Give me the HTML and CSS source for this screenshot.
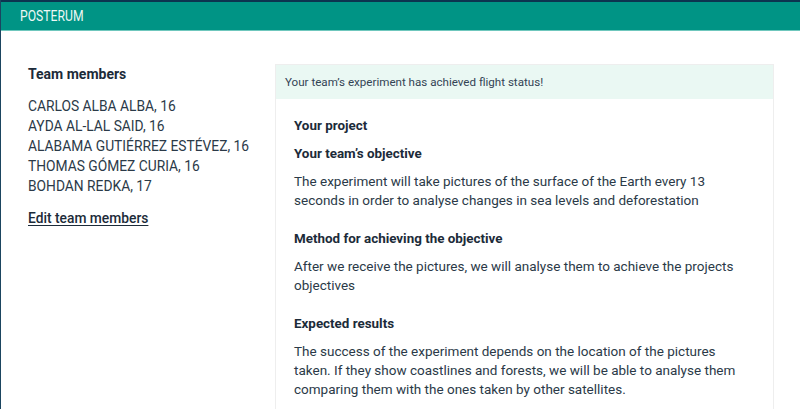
FILE: index.html
```html
<!DOCTYPE html>
<html>
<head>
    <meta charset="utf-8">
    <link rel="stylesheet" href="styles.css">
</head>
<body>

<header class="topbar">
    <span class="brand">POSTERUM</span>
</header>

<main class="page">
    <aside class="team">
        <h2 class="team-title">Team members</h2>
        <ul class="member-list">
            <li>CARLOS ALBA ALBA, 16</li>
            <li>AYDA AL-LAL SAID, 16</li>
            <li>ALABAMA GUTIÉRREZ ESTÉVEZ, 16</li>
            <li>THOMAS GÓMEZ CURIA, 16</li>
            <li>BOHDAN REDKA, 17</li>
        </ul>
        <a class="edit-link" href="#">Edit team members</a>
    </aside>

    <section class="card">
        <div class="notice">Your team’s experiment has achieved flight status!</div>
        <div class="card-body">
            <h2 class="section-title">Your project</h2>

            <h3 class="section-title">Your team’s objective</h3>
            <p>The experiment will take pictures of the surface of the Earth every 13 seconds in order to analyse changes in sea levels and deforestation</p>

            <h3 class="section-title">Method for achieving the objective</h3>
            <p>After we receive the pictures, we will analyse them to achieve the projects objectives</p>

            <h3 class="section-title">Expected results</h3>
            <p>The success of the experiment depends on the location of the pictures taken. If they show coastlines and forests, we will be able to analyse them comparing them with the ones taken by other satellites.</p>
        </div>
    </section>
</main>

</body>
</html>
```

FILE: styles.css
```css
* {
    box-sizing: border-box;
}

html, body {
    height: 100%;
}

body {
    margin: 0;
    font-family: Roboto, "Liberation Sans", sans-serif;
    font-size: 14px;
    color: #2b3a48;
    background-color: #fff;
    border-left: 1px solid #1b4560;
    overflow: hidden;
    display: flex;
    flex-direction: column;
}

.topbar {
    height: 31px;
    flex-shrink: 0;
    background-color: #009485;
    border-top: 2px solid #0c3450;
    border-bottom: 1px solid #6fc7bd;
    padding: 0 19px;
    display: flex;
    align-items: center;
}

.brand {
    color: #eef8f6;
    font-size: 14.5px;
    transform: scaleX(0.84);
    transform-origin: left center;
}

.page {
    flex: 1;
    min-height: 0;
    overflow: hidden;
    display: flex;
    align-items: stretch;
    padding: 33px 26px 0 27px;
}

.team {
    width: 247px;
    flex-shrink: 0;
}

.team-title {
    margin: 0 0 12px;
    font-size: 14px;
    line-height: 20px;
    font-weight: bold;
    color: #1c2b39;
}

.member-list {
    list-style: none;
    margin: 0 0 12px;
    padding: 0;
    line-height: 20px;
    font-size: 13.8px;
}

.edit-link {
    display: block;
    line-height: 20px;
    font-size: 13.8px;
    color: #1c2b39;
    font-weight: 500;
    text-decoration: underline;
    text-underline-offset: 2px;
}

.card {
    flex: 1;
    border: 1px solid #eeeeee;
    border-bottom: none;
}

.notice {
    background-color: #eaf8f3;
    height: 34px;
    padding: 0 9px;
    display: flex;
    align-items: center;
    font-size: 11.6px;
    color: #334455;
}

.card-body {
    padding: 17px 18px 0 18px;
}

.section-title {
    margin: 0 0 8px;
    font-size: 13.4px;
    line-height: 20px;
    font-weight: bold;
    color: #1c2b39;
}

.card-body p {
    margin: 0 0 19px;
    font-size: 13.5px;
    line-height: 19px;
}
```
